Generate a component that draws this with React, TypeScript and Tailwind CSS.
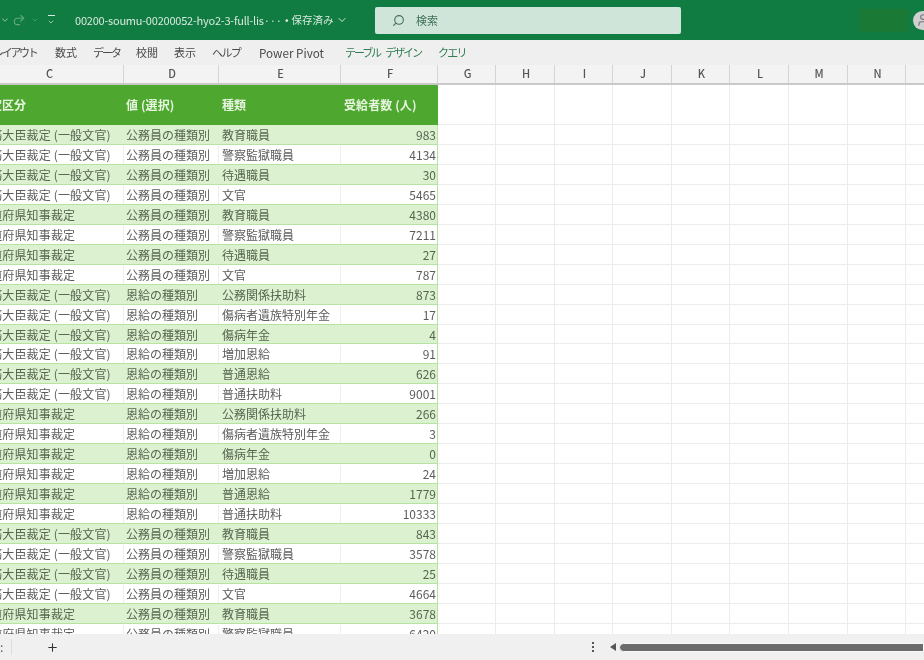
import * as React from "react";
import { ChevronDown, Plus, Redo2, Search, User } from "lucide-react";

const GOV = "総務大臣裁定 (一般文官)";
const PREF = "都道府県知事裁定";
const KOMUIN = "公務員の種類別";
const ONKYU = "恩給の種類別";

const rows: [string, string, string, string][] = [
  [GOV, KOMUIN, "教育職員", "983"],
  [GOV, KOMUIN, "警察監獄職員", "4134"],
  [GOV, KOMUIN, "待遇職員", "30"],
  [GOV, KOMUIN, "文官", "5465"],
  [PREF, KOMUIN, "教育職員", "4380"],
  [PREF, KOMUIN, "警察監獄職員", "7211"],
  [PREF, KOMUIN, "待遇職員", "27"],
  [PREF, KOMUIN, "文官", "787"],
  [GOV, ONKYU, "公務関係扶助料", "873"],
  [GOV, ONKYU, "傷病者遺族特別年金", "17"],
  [GOV, ONKYU, "傷病年金", "4"],
  [GOV, ONKYU, "増加恩給", "91"],
  [GOV, ONKYU, "普通恩給", "626"],
  [GOV, ONKYU, "普通扶助料", "9001"],
  [PREF, ONKYU, "公務関係扶助料", "266"],
  [PREF, ONKYU, "傷病者遺族特別年金", "3"],
  [PREF, ONKYU, "傷病年金", "0"],
  [PREF, ONKYU, "増加恩給", "24"],
  [PREF, ONKYU, "普通恩給", "1779"],
  [PREF, ONKYU, "普通扶助料", "10333"],
  [GOV, KOMUIN, "教育職員", "843"],
  [GOV, KOMUIN, "警察監獄職員", "3578"],
  [GOV, KOMUIN, "待遇職員", "25"],
  [GOV, KOMUIN, "文官", "4664"],
  [PREF, KOMUIN, "教育職員", "3678"],
  [PREF, KOMUIN, "警察監獄職員", "6420"],
];

const tableCols = ["w-[150px]", "w-[95px]", "w-[122px]", "w-[97px]"];

const emptyCols = [
  "w-[58px]",
  "w-[59px]",
  "w-[58px]",
  "w-[59px]",
  "w-[58px]",
  "w-[59px]",
  "w-[59px]",
  "w-[58px]",
  "w-[58px]",
];

const colLetters = ["C", "D", "E", "F", "G", "H", "I", "J", "K", "L", "M", "N", "O"];
const allCols = [...tableCols, ...emptyCols];

const tabs = [
  { label: "レイアウト", cls: "w-[62px] tracking-[-2.3px]" },
  { label: "数式", cls: "w-[38px]" },
  { label: "データ", cls: "w-[43px] tracking-[-2px]" },
  { label: "校閲", cls: "w-[38px]" },
  { label: "表示", cls: "w-[38px]" },
  { label: "ヘルプ", cls: "w-[47px] tracking-[-1.6px]" },
  { label: "Power Pivot", cls: "w-[86px] text-[11.7px]" },
];

const EmptyCells: React.FC = () => (
  <>
    {emptyCols.map((w, i) => (
      <div key={i} className={`${w} shrink-0 border-r border-b border-[#ececec]`} />
    ))}
  </>
);

const TitleBar: React.FC = () => (
  <header className="flex h-10 shrink-0 items-center bg-[#107c41] text-[#d8e9df]">
    <ChevronDown className="h-2.5 w-2.5 shrink-0 opacity-80" />
    <Redo2 className="ml-[2px] h-[14px] w-[14px] shrink-0 opacity-40" />
    <ChevronDown className="ml-[5px] h-2 w-2 shrink-0 opacity-40" />
    <div className="ml-[7px] flex w-[10px] shrink-0 flex-col items-center gap-[2px]">
      <div className="h-px w-[7px] bg-[#d8e9df]" />
      <ChevronDown className="h-2 w-2" />
    </div>
    <span className="ml-[19px] w-[205px] shrink-0 overflow-hidden whitespace-nowrap text-[11px] tracking-[-0.22px]">
      00200-soumu-00200052-hyo2-3-full-lis···
    </span>
    <span className="ml-[5px] flex w-[90px] shrink-0 items-center text-[10.5px]">
      <span className="mr-[3px]">•</span>保存済み
      <ChevronDown className="ml-[2px] h-3 w-3" />
    </span>
    <div className="flex h-[27px] w-[306px] shrink-0 items-center rounded-[2px] bg-[#cfe5d9] pl-[17px] text-[#3f6f55]">
      <Search className="h-[13px] w-[13px] -scale-x-100" />
      <span className="ml-[11px] text-[11px]">検索</span>
    </div>
    <div className="ml-[179px] h-[23px] w-[48px] shrink-0 bg-[#1a7a35]" />
    <div className="ml-[5px] flex h-[19px] w-[19px] shrink-0 items-center justify-center rounded-full bg-[#d0d0d0] text-[#777]">
      <User className="h-[14px] w-[14px]" />
    </div>
  </header>
);

const RibbonTabs: React.FC = () => (
  <nav className="flex h-[25px] shrink-0 items-center bg-[#efefef] text-[11px] text-[#4a4a4a]">
    <div className="-ml-[7px] flex items-center">
      {tabs.map((t) => (
        <span key={t.label} className={`${t.cls} shrink-0 whitespace-nowrap`}>
          {t.label}
        </span>
      ))}
      <span className="w-[93px] shrink-0 whitespace-nowrap tracking-[-2.1px] [word-spacing:5px] text-[#2f7d54]">テーブル デザイン</span>
      <span className="shrink-0 whitespace-nowrap tracking-[-1.8px] text-[#2f7d54]">クエリ</span>
    </div>
  </nav>
);

const ColumnHeaders: React.FC = () => (
  <div className="-ml-[26px] flex h-5 shrink-0 border-b-2 border-[#c9c9c9] bg-[#f3f3f3]">
    {colLetters.map((c, i) => (
      <div
        key={c}
        className={`${allCols[i]} flex shrink-0 items-center justify-center border-r border-[#d4d4d4] pb-[2px] pl-[2px] text-[11px] font-medium leading-none text-[#555]`}
      >
        {c}
      </div>
    ))}
  </div>
);

const Sheet: React.FC = () => (
  <main className="min-h-0 flex-1 overflow-hidden bg-white">
    <div className="-ml-[26px] flex h-10">
      <div className="flex w-[464px] shrink-0 items-center bg-[#4ea72e] pb-[1px] text-xs font-bold text-[#e8f5e0]">
        <span className="w-[150px] shrink-0 pl-[4px]">裁定区分</span>
        <span className="w-[95px] shrink-0 pl-[2px] tracking-[0.1px]">値 (選択)</span>
        <span className="w-[122px] shrink-0 pl-[3px]">種類</span>
        <span className="w-[97px] shrink-0 whitespace-nowrap pl-[3px] tracking-[0.1px]">受給者数 (人)</span>
      </div>
      <EmptyCells />
    </div>
    {rows.map((r, i) => (
      <div key={i} className="-ml-[26px] flex h-[19.96px]">
        <div
          className={`flex w-[464px] shrink-0 border-r border-b border-[#b8e2a2] pt-[1px] text-xs leading-none ${
            i % 2 === 0 ? "bg-[#dcf1d0] text-[#57654f]" : "bg-white text-[#5c5c5c]"
          }`}
        >
          <div className={`flex w-[150px] shrink-0 items-center whitespace-nowrap pl-[4px] tracking-[0.15px] ${i % 2 === 0 ? "" : "border-r border-[#eeeeee]"}`}>
            {r[0]}
          </div>
          <div className={`flex w-[95px] shrink-0 items-center whitespace-nowrap pl-[2px] ${i % 2 === 0 ? "" : "border-r border-[#eeeeee]"}`}>
            {r[1]}
          </div>
          <div className={`flex w-[122px] shrink-0 items-center whitespace-nowrap pl-[3px] ${i % 2 === 0 ? "" : "border-r border-[#eeeeee]"}`}>
            {r[2]}
          </div>
          <div className="flex flex-1 items-center justify-end pr-[1px]">{r[3]}</div>
        </div>
        <EmptyCells />
      </div>
    ))}
  </main>
);

const StatusBar: React.FC = () => (
  <footer className="flex h-[26px] shrink-0 items-center bg-[#f0f0f0] text-[#555]">
    <span className="w-[12px] shrink-0 border-r border-[#dddddd] text-left text-xs leading-4">:</span>
    <Plus className="ml-[34px] h-[13px] w-[13px] shrink-0 text-[#333]" />
    <div className="ml-[533px] flex shrink-0 flex-col gap-[2px]">
      <div className="h-[2px] w-[2px] bg-[#555]" />
      <div className="h-[2px] w-[2px] bg-[#555]" />
      <div className="h-[2px] w-[2px] bg-[#555]" />
    </div>
    <div className="ml-[16px] h-0 w-0 shrink-0 border-y-[4px] border-r-[6px] border-y-transparent border-r-[#555]" />
    <div className="ml-[3px] h-[9px] flex-1 rounded-l-full border border-[#f8f8f8] bg-[#6b6b6b]" />
  </footer>
);

export default function App() {
  return (
    <div className="flex h-[660px] w-[924px] flex-col overflow-hidden bg-white blur-[0.5px] font-['Noto_Sans_CJK_JP','Noto_Sans',sans-serif]">
      <TitleBar />
      <RibbonTabs />
      <ColumnHeaders />
      <Sheet />
      <StatusBar />
    </div>
  );
}
